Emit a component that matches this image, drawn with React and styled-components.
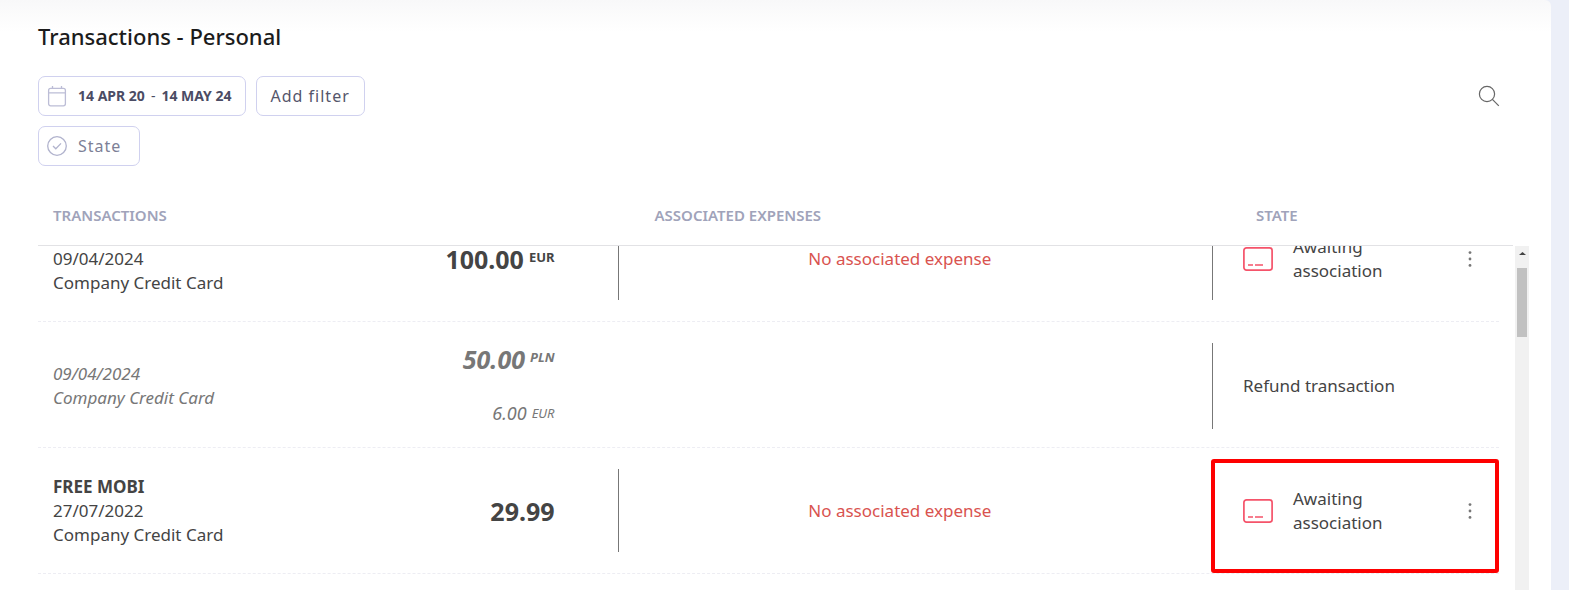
import React, { useLayoutEffect, useRef } from "react";
import styled, { createGlobalStyle, css } from "styled-components";

const HEAD_HEIGHT = 61;
const INITIAL_SCROLL = 50;

const GlobalStyle = createGlobalStyle`
  *, *::before, *::after { box-sizing: border-box; }
  body {
    margin: 0;
    background: #eceff8;
    color: #444;
    font: 17px/24px "Noto Sans", sans-serif;
  }
  button { font: inherit; color: inherit; cursor: pointer; }
`;

const Page = styled.div`
  height: 100vh;
  padding-right: 18px;
`;

const Panel = styled.main`
  height: 100%;
  display: flex;
  flex-direction: column;
  padding: 20px 22px 0 38px;
  border-top-right-radius: 6px;
  background: linear-gradient(#f8f8f9, #fff 32px);
`;

const Title = styled.h1`
  margin: 0 0 24px;
  font-size: 22px;
  line-height: 32px;
  font-weight: 500;
  color: #1c1c1c;
`;

const Toolbar = styled.div`
  display: flex;
  justify-content: space-between;
  align-items: flex-start;
  padding-right: 29px;
`;

const Filters = styled.div`
  display: flex;
  flex-direction: column;
  gap: 10px;
`;

const FilterLine = styled.div`
  display: flex;
  gap: 10px;
`;

const FilterButton = styled.button`
  height: 40px;
  display: flex;
  align-items: center;
  gap: 11px;
  padding: 0 ${(p) => (p.$plain ? 14 : p.$loose ? 18 : 13)}px 0 ${(p) => (p.$plain ? 14 : 8)}px;
  border: 1px solid #d0d1ef;
  border-radius: 7px;
  background: #fff;
  font-size: 16px;
  letter-spacing: 1px;
  color: ${(p) => (p.$muted ? "#7d7f96" : "#55566b")};
`;

const DateRange = styled.span`
  display: flex;
  gap: 6px;
  font-size: 14px;
  letter-spacing: normal;
  color: #4b4c64;

  b { font-weight: 700; }
`;

const IconButton = styled.button`
  display: flex;
  align-items: center;
  height: 40px;
  padding: 0;
  border: 0;
  background: none;
`;

const TableArea = styled.div`
  flex: 1;
  min-height: 0;
  display: flex;
  gap: 2px;
  margin-top: 19px;
`;

const Table = styled.table`
  flex: 1;
  min-width: 0;
  display: flex;
  flex-direction: column;
`;

const Head = styled.thead`
  display: block;
`;

const HeadRow = styled.tr`
  display: grid;
  grid-template-columns: 1fr 1fr 257px;
  align-items: center;
  height: ${HEAD_HEIGHT}px;
  padding-left: 15px;
  border-bottom: 1px solid #e2e2e5;
`;

const HeadCell = styled.th`
  padding: 0;
  text-align: left;
  font-size: 15px;
  font-weight: 600;
  color: #a0a3ba;
`;

const Body = styled.tbody`
  flex: 1;
  min-height: 0;
  display: block;
  overflow-y: auto;
  scrollbar-width: none;
  padding: 0 14px 40px 0;
`;

const Row = styled.tr`
  display: grid;
  grid-template-columns: 39fr 40fr 287px;
  height: 126px;
  padding: 21px 0;
  border-bottom: 1px dashed #ededf3;
  ${(p) =>
    p.$refund &&
    css`
      ${TransactionCell} { font-style: italic; color: #777; }
    `}
`;

const TransactionCell = styled.td`
  display: flex;
  justify-content: space-between;
  align-items: center;
  padding: 0 63px 0 15px;
`;

const Line = styled.div`
  min-height: 24px;
  font-weight: ${(p) => (p.$strong ? 700 : 400)};
`;

const Amounts = styled.div`
  display: flex;
  flex-direction: column;
  gap: 22px;
  text-align: right;
`;

const Amount = styled.div`
  display: flex;
  justify-content: flex-end;
  gap: 5px;
  font-size: ${(p) => (p.$minor ? 18 : 25)}px;
  line-height: 32px;
  font-weight: ${(p) => (p.$minor ? 400 : 700)};
`;

const Currency = styled.span`
  font-size: 13px;
  line-height: ${(p) => (p.$minor ? 32 : 28)}px;
`;

const ExpenseCell = styled.td`
  display: flex;
  align-items: center;
  justify-content: center;
  padding: 0 31px 0 0;
  border-left: 1px solid ${(p) => (p.$empty ? "transparent" : "#777")};
  color: #d9534f;
`;

const StateCell = styled.td`
  position: relative;
  display: flex;
  align-items: center;
  padding: 0 20px 0 30px;
  border-left: 1px solid #777;
`;

const StateLabel = styled.span`
  width: ${(p) => (p.$wide ? "auto" : "110px")};
  margin-left: ${(p) => (p.$wide ? 0 : 20)}px;
`;

const MenuButton = styled.button`
  display: flex;
  justify-content: center;
  width: 18px;
  margin-left: auto;
  padding: 0;
  border: 0;
  background: none;
`;

const Highlight = styled.div`
  position: absolute;
  inset: -10px 0 -21px -2px;
  border: 4px solid #fe0000;
  border-radius: 3px;
  pointer-events: none;
`;

const Scrollbar = styled.div`
  width: 14px;
  margin-top: ${HEAD_HEIGHT}px;
  padding: 6px 2px 0;
  background: #f1f1f1;
`;

const Arrow = styled.svg`
  display: block;
  margin: 0 auto 13px;
`;

const Thumb = styled.div`
  height: 69px;
  background: #c1c1c1;
`;

const CalendarIcon = () => (
  <svg width="20" height="22" viewBox="0 0 20 22" fill="none" stroke="#bcbdd6" strokeWidth="1.3" aria-hidden="true">
    <rect x="1.6" y="3.4" width="16.8" height="17.4" rx="2" />
    <path d="M1.6 7.8h16.8M5.5 1v2.4M14.5 1v2.4" />
  </svg>
);

const CheckIcon = () => (
  <svg width="20" height="20" viewBox="0 0 20 20" fill="none" stroke="#b1b3cd" strokeWidth="1.3" aria-hidden="true">
    <circle cx="10" cy="10" r="9.3" />
    <path d="M6 10l2.8 2.8 5.2-5.4" />
  </svg>
);

const SearchIcon = () => (
  <svg width="22" height="22" viewBox="0 0 22 22" fill="none" stroke="#666" strokeWidth="1.2" aria-hidden="true">
    <circle cx="9" cy="9" r="7.6" />
    <path d="M14.4 14.4l6.4 6.4" />
  </svg>
);

const CardIcon = () => (
  <svg width="30" height="24" viewBox="0 0 30 24" fill="none" stroke="#f5536a" strokeWidth="1.7" aria-hidden="true">
    <rect x="0.9" y="0.9" width="28.2" height="22.2" rx="2.6" />
    <path d="M5 18h5M12 18h8" />
  </svg>
);

const DotsIcon = () => (
  <svg width="4" height="16" viewBox="0 0 4 16" fill="#777" aria-hidden="true">
    <circle cx="2" cy="1.6" r="1.4" />
    <circle cx="2" cy="8" r="1.4" />
    <circle cx="2" cy="14.4" r="1.4" />
  </svg>
);

const transactions = [
  {
    name: "",
    date: "09/04/2024",
    amounts: [{ value: "100.00", currency: "EUR" }],
    expense: "No associated expense",
    state: "Awaiting association",
  },
  {
    refund: true,
    date: "09/04/2024",
    amounts: [
      { value: "50.00", currency: "PLN" },
      { value: "6.00", currency: "EUR" },
    ],
    state: "Refund transaction",
  },
  {
    name: "FREE MOBI",
    date: "27/07/2022",
    amounts: [{ value: "29.99" }],
    expense: "No associated expense",
    state: "Awaiting association",
    highlighted: true,
  },
];

function TransactionRow({ item }) {
  return (
    <Row role="row" $refund={item.refund}>
      <TransactionCell role="cell">
        <div>
          {!item.refund && <Line $strong>{item.name}</Line>}
          <Line>{item.date}</Line>
          <Line>Company Credit Card</Line>
        </div>
        <Amounts>
          {item.amounts.map((a, i) => (
            <Amount key={a.value} $minor={i > 0}>
              {a.value}
              {a.currency && <Currency $minor={i > 0}>{a.currency}</Currency>}
            </Amount>
          ))}
        </Amounts>
      </TransactionCell>
      <ExpenseCell role="cell" $empty={!item.expense}>{item.expense}</ExpenseCell>
      <StateCell role="cell">
        {!item.refund && <CardIcon />}
        <StateLabel $wide={item.refund}>{item.state}</StateLabel>
        {!item.refund && (
          <MenuButton type="button" aria-label="Transaction actions">
            <DotsIcon />
          </MenuButton>
        )}
        {item.highlighted && <Highlight />}
      </StateCell>
    </Row>
  );
}

export default function App() {
  const bodyRef = useRef(null);

  useLayoutEffect(() => {
    bodyRef.current.scrollTop = INITIAL_SCROLL;
  }, []);

  return (
    <Page>
      <GlobalStyle />
      <Panel>
        <Title>Transactions - Personal</Title>
        <Toolbar>
          <Filters>
            <FilterLine>
              <FilterButton type="button">
                <CalendarIcon />
                <DateRange>
                  <b>14 APR 20</b>
                  <span>-</span>
                  <b>14 MAY 24</b>
                </DateRange>
              </FilterButton>
              <FilterButton type="button" $plain>Add filter</FilterButton>
            </FilterLine>
            <FilterLine>
              <FilterButton type="button" $muted $loose>
                <CheckIcon />
                State
              </FilterButton>
            </FilterLine>
          </Filters>
          <IconButton type="button" aria-label="Search">
            <SearchIcon />
          </IconButton>
        </Toolbar>
        <TableArea>
          <Table role="table">
            <Head role="rowgroup">
              <HeadRow role="row">
                <HeadCell role="columnheader">TRANSACTIONS</HeadCell>
                <HeadCell role="columnheader">ASSOCIATED EXPENSES</HeadCell>
                <HeadCell role="columnheader">STATE</HeadCell>
              </HeadRow>
            </Head>
            <Body role="rowgroup" ref={bodyRef}>
              {transactions.map((item, i) => (
                <TransactionRow key={i} item={item} />
              ))}
            </Body>
          </Table>
          <Scrollbar aria-hidden="true">
            <Arrow width="7" height="3" viewBox="0 0 7 3" fill="#444">
              <path d="M0 3L3.5 0L7 3z" />
            </Arrow>
            <Thumb />
          </Scrollbar>
        </TableArea>
      </Panel>
    </Page>
  );
}
